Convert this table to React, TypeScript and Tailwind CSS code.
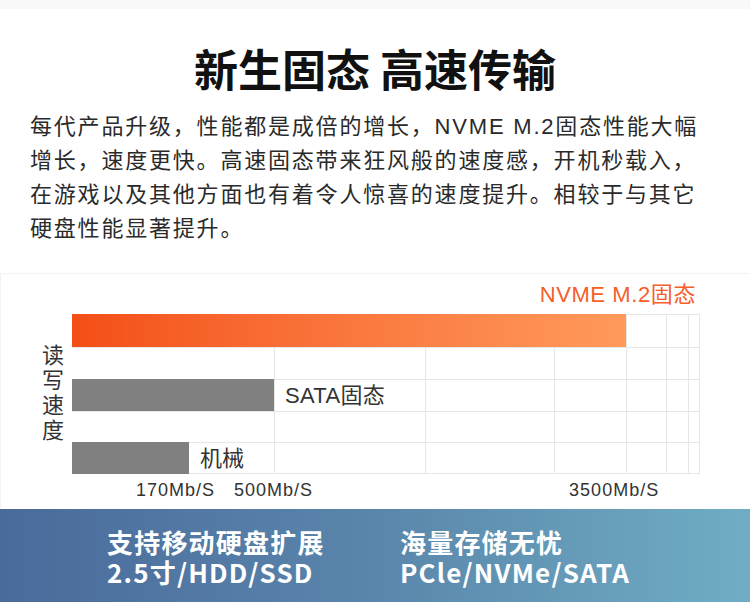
const cjk = { fontFamily: '"Noto Sans CJK SC", "Noto Sans", sans-serif' }
const mixed = { fontFamily: '"Liberation Sans", "Noto Sans CJK SC", sans-serif' }

const gridX = [202, 353, 482, 554, 594, 616, 627]

function SpeedChart() {
  return (
    <div className="relative w-[628px] h-[160px]">
      <svg className="absolute inset-0" width="628" height="160" viewBox="0 0 628 160">
        {gridX.map((x) => (
          <line key={x} x1={x + 0.5} y1="0" x2={x + 0.5} y2="160" stroke="#e6e6e6" strokeWidth="1" />
        ))}
        {[0, 33, 65, 97, 128, 159].map((y) => (
          <line key={y} x1="0" y1={y + 0.5} x2="628" y2={y + 0.5} stroke="#e6e6e6" strokeWidth="1" />
        ))}
      </svg>
      <div className="relative flex flex-col" style={mixed}>
        <div className="h-[33px] flex">
          <div className="w-[554px] h-full bg-gradient-to-r from-[#f34e15] to-[#ff9a5b]" />
        </div>
        <div className="h-[32px]" />
        <div className="h-[32px] flex items-center">
          <div className="w-[202px] h-full bg-[#808080]" />
          <span className="ml-[11px] text-[22px] tracking-[0.3px] text-[#333]">SATA固态</span>
        </div>
        <div className="h-[31px]" />
        <div className="h-[32px] flex items-center">
          <div className="w-[117px] h-full bg-[#808080]" />
          <span className="ml-[11px] text-[22px] text-[#333]">机械</span>
        </div>
      </div>
    </div>
  )
}

export default function App() {
  return (
    <div className="w-[750px] h-[602px] bg-white overflow-hidden flex flex-col" style={cjk}>
      <div className="h-[9px] bg-[#f9f9f9]" />

      <h1 className="mt-[31px] text-center text-[44px] leading-[56px] font-bold text-[#111]">
        新生固态 高速传输
      </h1>

      <div
        className="mt-[14px] px-[30px] text-[22px] leading-[34px] tracking-[1.8px] text-[#2a2a2a] whitespace-nowrap"
        style={mixed}
      >
        <p>每代产品升级，性能都是成倍的增长，NVME M.2固态性能大幅</p>
        <p>增长，速度更快。高速固态带来狂风般的速度感，开机秒载入，</p>
        <p>在游戏以及其他方面也有着令人惊喜的速度提升。相较于与其它</p>
        <p>硬盘性能显著提升。</p>
      </div>

      <div className="mt-[27px] h-[236px] border-t border-l border-[#f3f3f3] flex flex-col">
        <div
          className="mt-[8px] pr-[54px] text-right text-[22px] leading-[26px] tracking-[0.6px] text-[#f4602a]"
          style={mixed}
        >
          NVME M.2固态
        </div>
        <div className="mt-[6px] flex items-center">
          <div className="w-[71px] pl-[41px] flex items-center">
            <span className="[writing-mode:vertical-rl] [text-orientation:upright] text-[22px] leading-[22px] tracking-[3px] text-[#333]">
              读写速度
            </span>
          </div>
          <SpeedChart />
        </div>
        <div className="mt-[5px] flex text-[18px] leading-[22px] tracking-[1px] text-[#333]" style={mixed}>
          <span className="ml-[135px]">170Mb/S</span>
          <span className="ml-[19px]">500Mb/S</span>
          <span className="ml-[256px]">3500Mb/S</span>
        </div>
      </div>

      <div className="h-[93px] bg-gradient-to-r from-[#4a6a9b] via-[#5a86ab] to-[#70adc4] flex pt-[18px] text-white font-bold text-[26px] leading-[30px] tracking-[1.2px] whitespace-pre-line">
        <p className="ml-[107px] w-[293px]">{"支持移动硬盘扩展\n2.5寸/HDD/SSD"}</p>
        <p>{"海量存储无忧\nPCle/NVMe/SATA"}</p>
      </div>
    </div>
  )
}
